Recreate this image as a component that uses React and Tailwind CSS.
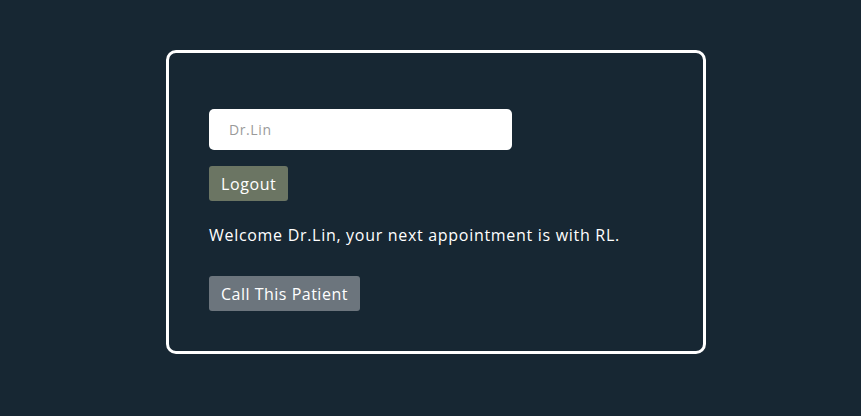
export default function App() {
  return (
    <div className="min-h-[416px] w-full bg-[#172733] flex justify-center pt-[50px] pl-[11px] font-['Open_Sans',sans-serif]">
      <div className="w-[540px] h-[304px] border-[3px] border-white rounded-[10px] px-[40px] pt-[56px]">
        <input
          type="text"
          placeholder="Dr.Lin"
          className="block w-[303px] h-[41px] rounded-[5px] bg-white px-[20px] text-[14px] tracking-[0.6px] text-gray-800 placeholder:text-[#9a9a9a] outline-none"
        />
        <button className="mt-[16px] h-[35px] px-[12px] rounded-[3px] bg-[#6b7563] text-white text-[16px] tracking-[0.6px]">
          Logout
        </button>
        <p className="mt-[22px] text-white text-[16px] leading-[24px] tracking-[0.7px]">
          Welcome Dr.Lin, your next appointment is with RL.
        </p>
        <button className="mt-[29px] h-[35px] px-[12px] rounded-[3px] bg-[#6c757d] text-white text-[16px] tracking-[0.5px]">
          Call This Patient
        </button>
      </div>
    </div>
  );
}
